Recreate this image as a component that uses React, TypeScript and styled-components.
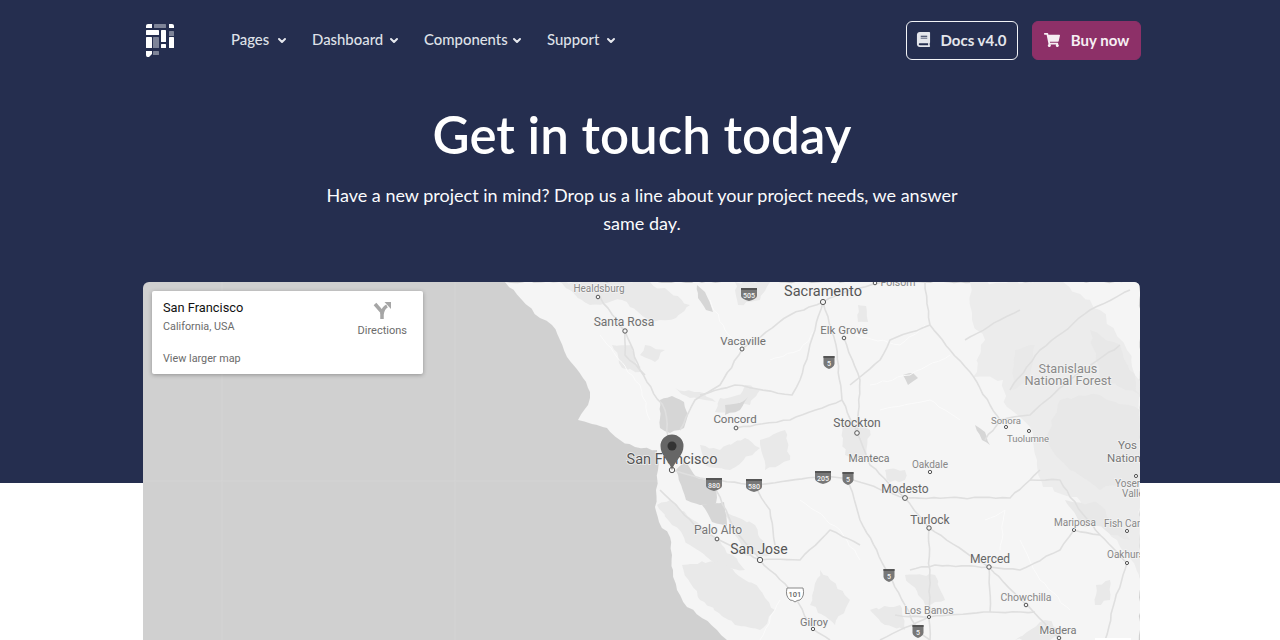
import React from "react";
import styled, { createGlobalStyle } from "styled-components";
import { FaBook, FaShoppingCart } from "react-icons/fa";

const Global = createGlobalStyle`
  html, body { margin: 0; padding: 0; background: #fff; }
  body { height: 640px; overflow: hidden; font-family: Lato, "Open Sans", sans-serif; }
  #root { height: 640px; overflow: hidden; }
`;

const Hero = styled.section`
  background: #252e4f;
  height: 483px;
  color: #fff;
`;
const Container = styled.div`
  width: 998px;
  margin-left: 143px;
`;
const Nav = styled.nav`
  display: flex;
  align-items: center;
  height: 39px;
  padding-top: 21px;
`;
const LogoMark = styled.svg`
  width: 28px;
  height: 33px;
  margin-left: 3px;
  margin-right: 57px;
  flex: none;
`;
const NavLinks = styled.ul`
  display: grid;
  grid-template-columns: 56px 87px 98px 69px;
  gap: 25px;
  list-style: none;
  margin: 0 0 3px;
  padding: 0;
  flex: 1;
`;
const NavLink = styled.li`
  display: flex;
  align-items: center;
  justify-content: space-between;
  font-size: 14.9px;
  font-weight: 500;
  color: #dfe1e8;
  white-space: nowrap;
`;
const Chevron = styled.svg`
  width: 10px;
  height: 7px;
  margin-top: 2px;
  flex: none;
`;
const Actions = styled.div`
  display: flex;
  gap: 14px;
`;
const Button = styled.a<{ $width: number; $solid?: boolean; $gap: number; $right: number }>`
  box-sizing: border-box;
  width: ${(p) => p.$width}px;
  height: 39px;
  padding: 0 ${(p) => p.$right}px 2px 0;
  display: flex;
  align-items: center;
  justify-content: center;
  gap: ${(p) => p.$gap}px;
  border-radius: 6px;
  font-size: 15px;
  font-weight: 700;
  white-space: nowrap;
  color: ${(p) => (p.$solid ? "#f6eef3" : "#e4e6ec")};
  background: ${(p) => (p.$solid ? "#8d3068" : "transparent")};
  border: 1px solid ${(p) => (p.$solid ? "#8d3068" : "#f2f3f6")};
`;
const Title = styled.h1`
  margin: 40px 0 0;
  font-size: 51px;
  line-height: 70px;
  font-weight: 600;
  text-align: center;
  color: #fff;
`;
const Lead = styled.p`
  width: 650px;
  margin: 11px auto 0;
  font-size: 18px;
  line-height: 28px;
  font-weight: 400;
  text-align: center;
  color: #fbfbfd;
`;
const MapFrame = styled.div`
  position: relative;
  width: 997px;
  height: 400px;
  margin-top: 45px;
  border-radius: 6px 6px 0 0;
  overflow: hidden;
  background: #d0d0d0;
`;
const MapCanvas = styled.svg`
  display: block;
  width: 997px;
  height: 400px;
`;
const Place = styled.text<{ $size: number; $tone: string }>`
  font-family: Roboto, "Liberation Sans", sans-serif;
  font-size: ${(p) => p.$size}px;
  fill: ${(p) => p.$tone};
  stroke: #f5f5f5;
  stroke-width: 1.5px;
  stroke-opacity: 0.85;
  paint-order: stroke;
`;
const ShieldNumber = styled.text`
  font-family: Roboto, sans-serif;
  font-size: 7px;
  font-weight: 500;
  fill: #f4f4f4;
  text-anchor: middle;
`;
const InfoCard = styled.div`
  position: absolute;
  left: 9px;
  top: 9px;
  box-sizing: border-box;
  width: 271px;
  height: 83px;
  padding: 9px 11px;
  background: #fff;
  border-radius: 2px;
  box-shadow: 0 1px 4px rgba(0, 0, 0, 0.3);
  font-family: Roboto, sans-serif;
  display: flex;
  justify-content: space-between;
`;
const CardText = styled.div`
  display: flex;
  flex-direction: column;
`;
const CardName = styled.div`
  font-size: 12.8px;
  line-height: 15px;
  font-weight: 400;
  color: #111;
`;
const CardMeta = styled.div<{ $top: number }>`
  font-size: 10.8px;
  line-height: 13px;
  margin-top: ${(p) => p.$top}px;
  color: #6b6b6b;
`;
const Directions = styled.div`
  display: flex;
  flex-direction: column;
  align-items: center;
  margin: 1px 5px 0 0;
  font-size: 11px;
  line-height: 13px;
  color: #6b6b6b;
`;
const DirIcon = styled.svg`
  width: 20px;
  height: 20px;
  margin-bottom: 3px;
`;

const logo: [number, number, number, number, string][] = [
  [8, 0, 12, 4, "#7e8498"],
  [0, 6, 13, 5, "#fff"], [15, 6, 5, 12, "#fff"], [23, 7, 5, 5, "#7e8498"],
  [0, 13, 6, 11, "#fff"], [7, 13, 6, 11, "#7e8498"], [15, 20, 5, 4, "#fff"], [23, 13, 5, 11, "#fff"],
  [7, 27, 6, 4, "#7e8498"],
];

const places: [string, number, number, number, string, "start" | "middle"][] = [
  ["Healdsburg", 599, 292, 10, "#888", "middle"],
  ["Santa Rosa", 624, 326, 12, "#707070", "middle"],
  ["Vacaville", 743, 345, 11.5, "#707070", "middle"],
  ["Sacramento", 823, 296, 14.5, "#555", "middle"],
  ["Folsom", 898, 286, 10.5, "#888", "middle"],
  ["Elk Grove", 844, 334, 11.5, "#777", "middle"],
  ["Concord", 735, 423, 11.5, "#707070", "middle"],
  ["Stockton", 857, 427, 12, "#666", "middle"],
  ["Manteca", 869, 462, 10.5, "#777", "middle"],
  ["Oakdale", 930, 468, 10, "#888", "middle"],
  ["Sonora", 1006, 424, 9.5, "#888", "middle"],
  ["Tuolumne", 1028, 442, 9.5, "#888", "middle"],
  ["Stanislaus", 1068, 373, 12.7, "#8a8a8a", "middle"],
  ["National Forest", 1068, 385, 12.8, "#8a8a8a", "middle"],
  ["Yos", 1118, 449, 11.5, "#777", "start"],
  ["Nation", 1107, 462, 11.5, "#777", "start"],
  ["Yosemite", 1115, 487, 10, "#888", "start"],
  ["Valley", 1122, 497, 10, "#888", "start"],
  ["San Francisco", 672, 464, 14.5, "#555", "middle"],
  ["Modesto", 905, 493, 12, "#666", "middle"],
  ["Turlock", 930, 524, 12, "#666", "middle"],
  ["Palo Alto", 718, 534, 12, "#777", "middle"],
  ["San Jose", 759, 554, 14, "#555", "middle"],
  ["Gilroy", 814, 626, 11, "#777", "middle"],
  ["Merced", 990, 563, 12, "#666", "middle"],
  ["Mariposa", 1075, 526, 10, "#888", "middle"],
  ["Fish Camp", 1104, 527, 10, "#888", "start"],
  ["Oakhurst", 1107, 558, 10, "#888", "start"],
  ["Chowchilla", 1026, 601, 10.5, "#888", "middle"],
  ["Los Banos", 929, 614, 10.5, "#888", "middle"],
  ["Madera", 1058, 634, 11, "#777", "middle"],
];
const dots: [number, number, number][] = [
  [598, 297, 1.8], [625, 331, 2.2], [742, 349, 2], [823, 302, 2.6], [875, 283, 1.8], [844, 338, 1.8],
  [736, 428, 1.9], [857, 433, 2.3], [930, 472, 1.7], [1006, 427, 1.6], [1029, 431, 1.6], [1136, 476, 1.6],
  [672, 470, 2.7], [905, 498, 2.4], [929, 528, 2.2], [717, 539, 1.9], [760, 560, 2.7], [813, 629, 1.7],
  [989, 567, 2.2], [1074, 530, 1.6], [1127, 531, 1.6], [1127, 563, 1.6], [1026, 605, 1.8], [929, 617, 1.6], [1059, 638, 1.8],
];
const shields: [string, number, number][] = [
  ["505", 749, 294], ["5", 829, 362], ["880", 714, 484], ["580", 754, 485], ["205", 823, 477],
  ["5", 848, 478], ["5", 889, 575], ["5", 918, 631],
];

/* Turns a straight polyline into an organic, map-like line with a seeded jitter. */
function organic(d: string, amp: number, step = 7): string {
  const nums = d.match(/-?\d+(\.\d+)?/g)!.map(Number);
  const closed = /Z\s*$/.test(d);
  const pts: [number, number][] = [];
  for (let i = 0; i < nums.length; i += 2) pts.push([nums[i], nums[i + 1]]);
  if (closed) pts.push(pts[0]);
  let seed = nums.reduce((a, b) => a + b, 7);
  const rnd = () => {
    seed = (seed * 9301 + 49297) % 233280;
    return seed / 233280 - 0.5;
  };
  let out = `M${pts[0][0]} ${pts[0][1]}`;
  for (let i = 1; i < pts.length; i++) {
    const [x0, y0] = pts[i - 1];
    const [x1, y1] = pts[i];
    const n = Math.max(1, Math.round(Math.hypot(x1 - x0, y1 - y0) / step));
    for (let k = 1; k <= n; k++) {
      const t = k / n;
      const j = k === n ? 0 : amp;
      out += ` L${(x0 + (x1 - x0) * t + rnd() * j).toFixed(1)} ${(y0 + (y1 - y0) * t + rnd() * j).toFixed(1)}`;
    }
  }
  return closed ? out + " Z" : out;
}

const landShape = "M505 282 L522 300 L540 318 L552 325 L560 340 L567 357 L576 368 L583 378 L590 392 L588 405 L578 420 L592 424 L607 428 L620 440 L635 447 L657 450 L658 470 L656 490 L655 507 L659 522 L670 537 L672 555 L673 570 L677 590 L687 607 L702 618 L717 630 L727 640 L727 682 L1140 682 L1140 282 Z";

const mids = [
  "M560 282 L610 282 L650 282 L690 305 L676 318 L650 322 L622 300 L590 305 Z",
  "M645 345 L665 350 L655 362 L640 355 Z",
  "M612 345 L632 345 L640 372 L622 368 Z",
  "M735 282 L770 282 L760 300 L738 305 Z",
  "M675 388 L700 392 L716 402 L690 398 Z",
  "M720 398 L745 395 L735 412 L715 412 Z",
  "M745 385 L760 390 L750 405 L738 400 Z",
  "M657 505 L670 500 L700 525 L722 545 L745 570 L720 565 L690 545 L672 525 Z",
  "M682 565 L720 560 L760 590 L775 610 L760 630 L735 625 L700 600 Z",
  "M722 510 L755 525 L770 555 L745 555 Z",
  "M700 445 L720 450 L745 438 L760 448 L730 470 L705 465 Z",
  "M760 440 L785 430 L790 460 L765 470 Z",
  "M840 420 L870 430 L865 460 L845 455 Z",
  "M820 570 L850 600 L835 625 L810 605 Z",
  "M858 305 L866 306 L868 322 L858 322 Z",
  "M1015 640 L1045 620 L1065 630 L1050 640 Z",
  "M885 470 L905 470 L905 480 L890 482 Z",
  "M905 575 L935 575 L945 600 L925 605 Z",
  "M870 610 L900 605 L905 630 L885 625 Z",
  "M1096 585 L1110 580 L1110 600 L1095 605 Z",
  "M1015 350 L1035 345 L1030 380 L1012 390 Z",
];
const waterBits = [
  "M660 400 L672 396 L684 402 L688 415 L684 428 L670 433 L660 428 Z",
  "M676 470 L685 460 L697 478 L718 482 L716 503 L700 505 L686 500 Z",
  "M702 505 L724 502 L727 526 L712 522 Z",
  "M697 285 L705 292 L713 312 L706 310 L698 298 Z",
  "M725 405 L742 402 L748 397 L740 410 L725 415 Z",
  "M903 375 L913 373 L918 378 L908 385 Z",
  "M975 425 L985 432 L990 445 L982 440 Z",
];
const roads = [
  "M600 297 L625 331 L640 370 L665 410 L672 470",
  "M625 331 L625 355 L645 375",
  "M742 349 L720 385 L695 400 L680 430",
  "M823 302 L790 315 L742 349",
  "M823 302 L850 290 L880 283",
  "M823 302 L815 330 L800 380 L792 395 L735 385 L700 395",
  "M844 338 L860 380 L857 433 L870 465 L905 498 L929 528 L989 567 L1059 638",
  "M823 302 L836 345 L842 400 L857 433",
  "M736 428 L790 420 L842 400",
  "M672 470 L700 478 L754 485 L823 476 L848 478 L905 498",
  "M660 490 L700 530 L760 560 L790 590 L813 629 L830 640",
  "M714 484 L735 530 L760 560",
  "M754 485 L770 510 L775 545",
  "M848 478 L860 520 L889 575 L918 631 L930 640",
  "M905 498 L1010 498 L1030 480 L1040 470",
  "M929 528 L930 640",
  "M989 567 L1020 570 L1060 550 L1074 530 L1100 535 L1127 563 L1115 600 L1105 640",
  "M910 570 L935 565 L989 567 L990 612",
  "M895 615 L929 617 L990 612 L1035 612",
  "M929 617 L880 640",
  "M925 282 L930 325 L950 350 L970 372 L990 405 L1000 420 L985 440",
  "M930 325 L890 340 L880 360 L850 385",
  "M965 340 L1000 320 L1020 310",
  "M1000 420 L1030 415 L1070 380 L1120 345",
  "M1010 390 L1040 350 L1090 310 L1130 290",
  "M1030 480 L1060 480 L1070 497 L1100 535",
  "M760 560 L800 560 L830 530 L860 545",
];
const lanes = [
  "M855 335 L900 345 L925 325",
  "M870 385 L910 375 L950 355",
  "M600 335 L640 385 L650 420",
  "M710 300 L725 330 L740 350",
  "M770 360 L800 350 L815 330",
  "M800 500 L840 530 L860 560",
  "M985 520 L1005 510 L1000 550",
  "M780 600 L760 640",
  "M1020 540 L1040 580 L1070 610",
  "M880 410 L930 400 L960 420",
];
const forestInner = [
  "M1060 400 L1100 395 L1140 410 L1140 480 L1100 490 L1070 470 L1045 440 Z",
  "M1090 330 L1120 345 L1140 395 L1100 380 Z",
  "M1065 500 L1100 505 L1130 540 L1105 530 L1080 525 Z",
];

const mapChrome = { viewBox: "143 282 997 400" };

function Chev() {
  return (
    <Chevron viewBox="0 0 10 7">
      <path d="M2 2 L5 5 L8 2" fill="none" stroke="#e6e8ee" strokeWidth="2" strokeLinecap="round" strokeLinejoin="round" />
    </Chevron>
  );
}

export default function App() {
  return (
    <>
      <Global />
      <Hero>
        <Container>
          <Nav>
            <LogoMark viewBox="0 0 28 33">
              <path d="M2 0 H6 V4 H0 V2 Q0 0 2 0 Z" fill="#fff" />
              <path d="M23 0 H26 Q28 0 28 2 V4 H23 Z" fill="#fff" />
              <path d="M0 27 H6 V30 L3 33 H1.500 Q0 33 0 31 Z" fill="#fff" />
              {logo.map(([x, y, w, h, c], i) => (
                <rect key={i} x={x} y={y} width={w} height={h} fill={c} rx="0.6" />
              ))}
            </LogoMark>
            <NavLinks>
              {["Pages", "Dashboard", "Components", "Support"].map((n) => (
                <NavLink key={n}>{n}<Chev /></NavLink>
              ))}
            </NavLinks>
            <Actions>
              <Button $width={112} $gap={10} $right={2}><FaBook size={15} />Docs v4.0</Button>
              <Button $width={109} $gap={11} $right={0} $solid><FaShoppingCart size={16} />Buy now</Button>
            </Actions>
          </Nav>
          <Title>Get in touch today</Title>
          <Lead>Have a new project in mind? Drop us a line about your project needs, we answer same day.</Lead>
          <MapFrame>
            <MapCanvas {...mapChrome}>
              <defs>
                <filter id="soft"><feGaussianBlur stdDeviation="0.6" /></filter>
              </defs>
              <g filter="url(#soft)">
                <path d="M222 282 V640 M455 282 V640 M143 481 H660" stroke="#d4d4d4" strokeWidth="1" fill="none" />
                <path fill="#f5f5f5" d={organic(landShape, 2.5, 6)} />
                <path fill="#ececec" d={organic("M970 282 L1063 282 L1100 310 L1127 350 L1140 387 L1140 577 L1117 540 L1077 497 L1043 487 L1037 460 L1030 427 L1007 407 L1003 380 L973 377 L985 340 L972 320 Z", 5, 7)} />
                <g fill="#e8e8e8">{forestInner.map((d, i) => <path key={i} d={organic(d, 5, 7)} />)}</g>
                <g fill="#e9e9e9">{mids.map((d, i) => <path key={i} d={organic(d, 3.5, 5)} />)}</g>
                <g fill="#d6d6d6">{waterBits.map((d, i) => <path key={i} d={organic(d, 1.5, 5)} />)}</g>
                <g fill="none" stroke="#fbfbfb" strokeWidth="1" strokeLinejoin="round">
                  {lanes.map((d, i) => <path key={i} d={organic(d, 2.5, 6)} />)}
                </g>
                <g fill="none" stroke="#dfdfdf" strokeWidth="1.6" strokeLinejoin="round">
                  {roads.map((d, i) => <path key={i} d={organic(d, 1.6, 7)} />)}
                </g>
              </g>
              {shields.map(([n, x, y], i) => {
                const half = n.length > 1 ? 8 : 5.5;
                return (
                  <g key={i}>
                    <path d={`M${x - half} ${y - 6} H${x + half} V${y + 2} Q${x + half - 0.5} ${y + 5} ${x} ${y + 7} Q${x - half + 0.5} ${y + 5} ${x - half} ${y + 2} Z`} fill="#777" />
                    <rect x={x - half} y={y - 6} width={half * 2} height="2" fill="#555" />
                    <ShieldNumber x={x} y={y + 4}>{n}</ShieldNumber>
                  </g>
                );
              })}
              <path d="M787 588 H803 Q805 596 800 600 Q797 600 795 602 Q793 600 790 600 Q785 596 787 588 Z" fill="#fff" stroke="#888" strokeWidth="1" />
              <text x="795" y="597" textAnchor="middle" fontFamily="Roboto, sans-serif" fontSize="7.5" fontWeight="500" fill="#666">101</text>
              <g fill="#f5f5f5" stroke="#555">
                {dots.map(([x, y, r], i) => <circle key={i} cx={x} cy={y} r={r} strokeWidth="1" />)}
              </g>
              {places.map(([t, x, y, s, c, a]) => (
                <Place key={t} x={x} y={y} $size={s} $tone={c} textAnchor={a}>{t}</Place>
              ))}
              <path d="M672 470 C669 460 660.500 456 660.500 446 A11.500 11.500 0 0 1 683.500 446 C683.500 456 675 460 672 470 Z" fill="#666" />
              <circle cx="672" cy="446" r="4.500" fill="#333" />
              <rect x="1095" y="638" width="36" height="10" fill="#fff" />
            </MapCanvas>
            <InfoCard>
              <CardText>
                <CardName>San Francisco</CardName>
                <CardMeta $top={5}>California, USA</CardMeta>
                <CardMeta $top={19}>View larger map</CardMeta>
              </CardText>
              <Directions>
                <DirIcon viewBox="0 0 20 20">
                  <path d="M10 18 V11 L3 3" fill="none" stroke="#a6a6a6" strokeWidth="3.500" />
                  <path d="M10 13 Q11 7 15 5" fill="none" stroke="#a6a6a6" strokeWidth="3.500" />
                  <path d="M12.500 1 H19 V8 Z" fill="#a6a6a6" />
                </DirIcon>
                Directions
              </Directions>
            </InfoCard>
          </MapFrame>
        </Container>
      </Hero>
    </>
  );
}
